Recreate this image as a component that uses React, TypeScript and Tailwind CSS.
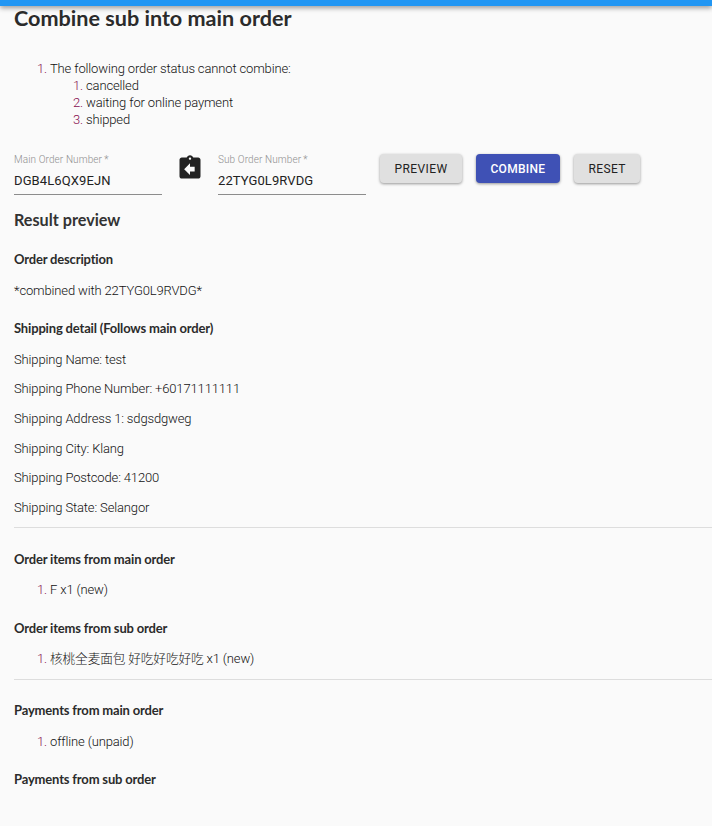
import { MdAssignmentReturn } from "react-icons/md";

const sectionHeading = "font-['Lato',sans-serif] font-bold text-[13px] tracking-[-0.17px] leading-[19.6px] text-[#2b2b2b] mb-[10px]";
const line = "text-[13px] tracking-[-0.14px] leading-[19.6px] mb-[10px] font-light text-[#111]";
const orderedList = "list-decimal pl-9 text-[13px] tracking-[-0.14px] leading-[17px] font-light text-[#111] marker:text-[#880e4f]";

function OrderField({ label, value }: { label: string; value: string }) {
  return (
    <div className="w-[148px]">
      <div className="text-[10px] leading-3 tracking-[0.1px] text-[#8f8f8f] font-light">{label}{"\u2009"}*</div>
      <div className="mt-[5px] h-[24px] border-b border-[#8c8c8c] pt-[1px] text-[13px] tracking-[0.1px] leading-[18px] text-[#222] font-normal">
        {value}
      </div>
    </div>
  );
}

function ActionButton({ label, primary }: { label: string; primary?: boolean }) {
  return (
    <button
      className={
        primary
          ? "h-[29px] rounded px-[14.5px] text-xs font-medium tracking-[0.3px] bg-[#3f51b5] text-white shadow-[0_1px_3px_rgba(0,0,0,0.4)]"
          : "h-[29px] rounded px-[14.5px] text-xs font-normal tracking-[0.4px] bg-[#e0e0e0] text-[#222] shadow-[0_1px_3px_rgba(0,0,0,0.4)]"
      }
    >
      {label}
    </button>
  );
}

export default function App() {
  return (
    <div className="h-[826px] overflow-hidden bg-[#fafafa] font-['Roboto','Noto_Sans_CJK_SC',sans-serif] text-[#222]">
      <div className="h-[6px] bg-[#2196f3] shadow-[0_2px_5px_rgba(0,0,0,0.4)]" />
      <main className="px-[14px]">
        <h1 className="font-['Lato',sans-serif] font-bold text-[21.6px] leading-[24px] text-[#2b2b2b]">
          Combine sub into main order
        </h1>

        <ol className={`${orderedList} mt-[30px]`}>
          <li>
            The following order status cannot combine:
            <ol className="list-decimal pl-9">
              <li>cancelled</li>
              <li>waiting for online payment</li>
              <li>shipped</li>
            </ol>
          </li>
        </ol>

        <div className="mt-[26px] flex items-start">
          <OrderField label="Main Order Number" value="DGB4L6QX9EJN" />
          <div className="w-[56px] flex justify-center">
            <MdAssignmentReturn className="w-7 h-7 text-[#222]" />
          </div>
          <OrderField label="Sub Order Number" value="22TYG0L9RVDG" />
          <div className="ml-[14px] flex gap-[14px]">
            <ActionButton label="PREVIEW" />
            <ActionButton label="COMBINE" primary />
            <ActionButton label="RESET" />
          </div>
        </div>

        <h2 className="mt-[15px] font-['Lato',sans-serif] font-bold text-[16.2px] leading-5 text-[#333]">Result preview</h2>

        <h3 className={`${sectionHeading} mt-[20px]`}>Order description</h3>
        <p className={`${line} mt-[11px]`}>*combined with 22TYG0L9RVDG*</p>

        <h3 className={`${sectionHeading} mt-[19px]`}>Shipping detail (Follows main order)</h3>
        <p className={`${line} mt-[11px]`}>Shipping Name: test</p>
        <p className={line}>Shipping Phone Number: +60171111111</p>
        <p className={line}>Shipping Address 1: sdgsdgweg</p>
        <p className={line}>Shipping City: Klang</p>
        <p className={line}>Shipping Postcode: 41200</p>
        <p className={line}>Shipping State: Selangor</p>

        <hr className="-mr-[14px] border-[#ddd]" />

        <h3 className={`${sectionHeading} mt-[22px]`}>Order items from main order</h3>
        <ol className={`${orderedList} mt-[11px]`}>
          <li>F x1 (new)</li>
        </ol>

        <h3 className={`${sectionHeading} mt-[21px]`}>Order items from sub order</h3>
        <ol className={`${orderedList} mt-[11px]`}>
          <li><span className="text-[12.7px]">核桃全麦面包 好吃好吃好吃</span> x1 (new)</li>
        </ol>

        <hr className="-mr-[14px] mt-[12px] border-[#ddd]" />

        <h3 className={`${sectionHeading} mt-[21px]`}>Payments from main order</h3>
        <ol className={`${orderedList} mt-[13px]`}>
          <li>offline (unpaid)</li>
        </ol>

        <h3 className={`${sectionHeading} mt-[20px]`}>Payments from sub order</h3>
      </main>
    </div>
  );
}
